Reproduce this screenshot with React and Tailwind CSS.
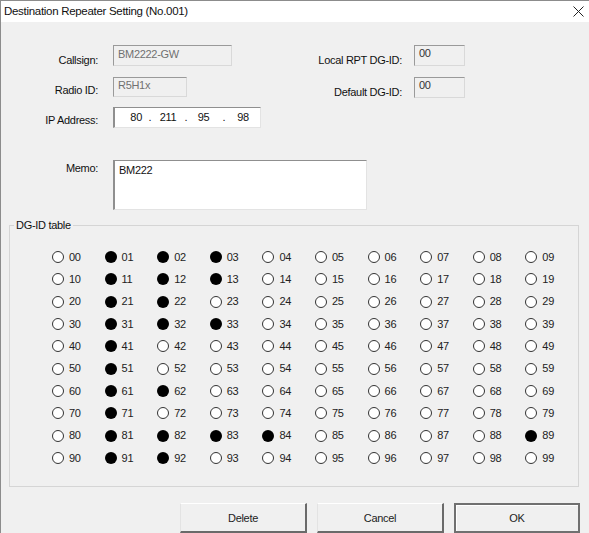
const checked = new Set([
  '01', '02', '03', '11', '12', '13', '21', '22', '31', '32', '33', '41',
  '51', '61', '62', '71', '81', '82', '83', '84', '89', '91', '92',
]);

const ids = Array.from({ length: 100 }, (_, i) => String(i).padStart(2, '0'));

function Radio({ id }) {
  const on = checked.has(id);
  return (
    <div className="flex items-center gap-[5px]">
      {on ? (
        <span className="w-[12px] h-[12px] rounded-full bg-black" />
      ) : (
        <span className="w-[12px] h-[12px] rounded-full bg-white border border-[#333]" />
      )}
      <span className="leading-[13px] text-[#222]">{id}</span>
    </div>
  );
}

function Button({ children, primary }) {
  return primary ? (
    <button className="h-[30px] w-[126px] bg-[#f0f0f0] border-2 border-[#707070] text-[#222] shadow-[inset_1px_1px_0_#fff]">
      {children}
    </button>
  ) : (
    <button className="h-[30px] w-[127px] bg-[#f0f0f0] border-t border-l border-t-[#fff] border-l-[#e3e3e3] border-r-2 border-b-2 border-r-[#6a6a6a] border-b-[#6a6a6a] text-[#222]">
      {children}
    </button>
  );
}

export default function App() {
  return (
    <div className="w-[589px] h-[533px] overflow-hidden bg-[#f0f0f0] border-t border-l border-[#8c8c8c] font-['Liberation_Sans',Arial,sans-serif] text-[11px] tracking-[-0.3px] text-[#111]">
      {/* title bar */}
      <div className="h-[21px] bg-white flex items-center justify-between pl-[3px] pr-[5px]">
        <span className="text-[11.5px] text-[#111]">Destination Repeater Setting (No.001)</span>
        <svg width="11" height="11" viewBox="0 0 11 11" className="text-[#222]">
          <path d="M0.5 0.5 L10.5 10.5 M10.5 0.5 L0.5 10.5" stroke="currentColor" strokeWidth="1" />
        </svg>
      </div>

      {/* top fields */}
      <div className="flex pt-[23px]">
        <div className="w-[289px] flex flex-col gap-[10px]">
          <div className="flex">
            <span className="w-[97px] text-right leading-[13px] pt-[9px]">Callsign:</span>
            <div className="ml-[15px] w-[119px] h-[21px] border border-t-[#9a9a9a] border-l-[#9a9a9a] border-r-[#d9d9d9] border-b-[#d9d9d9] px-[4px] pt-[2px] text-[#707070] leading-[13px]">
              BM2222-GW
            </div>
          </div>
          <div className="flex">
            <span className="w-[97px] text-right leading-[13px] pt-[7px]">Radio ID:</span>
            <div className="ml-[15px] w-[74px] h-[20px] border border-t-[#9a9a9a] border-l-[#9a9a9a] border-r-[#d9d9d9] border-b-[#d9d9d9] px-[4px] pt-[1px] text-[#707070] leading-[13px]">
              R5H1x
            </div>
          </div>
          <div className="flex">
            <span className="w-[97px] text-right leading-[13px] pt-[7px]">IP Address:</span>
            <div className="ml-[15px] w-[148px] h-[21px] bg-white border border-t-[#8f8f8f] border-l-2 border-l-[#8f8f8f] border-r-[#e3e3e3] border-b-[#e3e3e3] flex items-center text-[#111] leading-[13px]">
              <span className="w-[27px] text-right">80</span>
              <span className="w-[16px] text-center">.</span>
              <span className="w-[20px] text-center">211</span>
              <span className="w-[16px] text-center">.</span>
              <span className="w-[19px] text-center">95</span>
              <span className="w-[22px] text-center">.</span>
              <span className="w-[16px] text-center">98</span>
            </div>
          </div>
        </div>

        <div className="flex flex-col gap-[10px]">
          <div className="flex">
            <span className="w-[112px] text-right leading-[13px] pt-[9px]">Local RPT DG-ID:</span>
            <div className="ml-[12px] w-[51px] h-[21px] border border-t-[#9a9a9a] border-l-[#9a9a9a] border-r-[#d9d9d9] border-b-[#d9d9d9] px-[4px] pt-[1px] text-[#333] leading-[13px]">
              00
            </div>
          </div>
          <div className="flex">
            <span className="w-[112px] text-right leading-[13px] pt-[9px]">Default DG-ID:</span>
            <div className="ml-[12px] w-[51px] h-[21px] border border-t-[#9a9a9a] border-l-[#9a9a9a] border-r-[#d9d9d9] border-b-[#d9d9d9] px-[4px] pt-[1px] text-[#333] leading-[13px]">
              00
            </div>
          </div>
        </div>
      </div>

      {/* memo */}
      <div className="flex mt-[32px]">
        <span className="w-[97px] text-right leading-[13px] pt-[2px]">Memo:</span>
        <div className="ml-[15px] w-[254px] h-[50px] bg-white border border-t-[#8f8f8f] border-l-2 border-l-[#8f8f8f] border-r-[#e3e3e3] border-b-[#e3e3e3] px-[4px] pt-[3px] leading-[13px]">
          BM222
        </div>
      </div>

      {/* DG-ID table */}
      <fieldset className="ml-[8px] mt-[9px] w-[570px] border border-[#d5d5d5] pt-[14px] pb-[17px]">
        <legend className="ml-[4px] px-[2px] leading-[13px]">DG-ID table</legend>
        <div className="ml-[42px] grid grid-cols-[repeat(10,52.6px)] auto-rows-[22.33px] items-center">
          {ids.map((id) => (
            <Radio key={id} id={id} />
          ))}
        </div>
      </fieldset>

      {/* buttons */}
      <div className="flex gap-[10px] pl-[179px] mt-[16px]">
        <Button>Delete</Button>
        <Button>Cancel</Button>
        <Button primary>OK</Button>
      </div>
    </div>
  );
}
